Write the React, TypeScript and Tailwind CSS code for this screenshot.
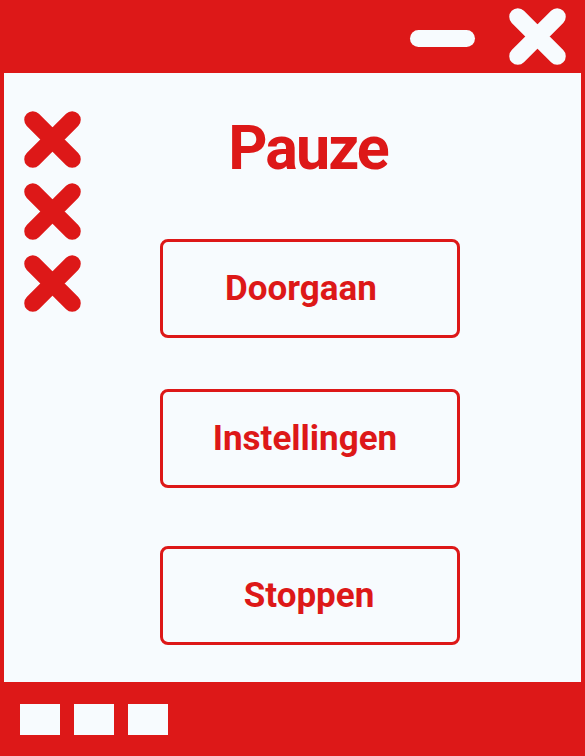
const RED = "#dd1818";

function CrossIcon({ color, size }: { color: string; size: number }) {
  return (
    <svg width={size} height={size} viewBox="0 0 60 60" fill="none">
      <path d="M10 10 L50 50 M50 10 L10 50" stroke={color} strokeWidth={17.5} strokeLinecap="round" />
    </svg>
  );
}

type MenuButton = {
  label: string;
  offset: string;
};

const buttons: MenuButton[] = [
  { label: "Doorgaan", offset: "mt-[60px] pr-[18px]" },
  { label: "Instellingen", offset: "mt-[51px] pr-[10px]" },
  { label: "Stoppen", offset: "mt-[58px] pr-[2px]" },
];

export default function App() {
  return (
    <div
      className="flex h-[756px] w-[585px] flex-col bg-[#dd1818]"
      style={{ fontFamily: "Roboto, 'Liberation Sans', sans-serif" }}
    >
      <header className="flex h-[73px] shrink-0 items-center justify-end gap-[33px] pr-[18px]">
        <div className="mt-[3px] h-[17px] w-[65px] rounded-full bg-[#f7fbfe]" />
        <div className="-mt-[1px]">
          <CrossIcon color="#f7fbfe" size={59} />
        </div>
      </header>

      <main className="mx-[4px] flex flex-1 bg-[#f7fbfe]">
        <div className="flex flex-col gap-[13px] pl-[19px] pt-[37px]">
          <CrossIcon color={RED} size={59} />
          <CrossIcon color={RED} size={59} />
          <CrossIcon color={RED} size={59} />
        </div>

        <div className="ml-[78px] flex w-[300px] flex-col">
          <h1 className="mt-[45px] pr-[4px] text-center text-[61px] font-bold leading-none tracking-[-2px] text-[#dd1818]">
            Pauze
          </h1>
          {buttons.map((item) => (
            <button
              key={item.label}
              className={`flex h-[99px] w-[300px] items-center justify-center rounded-[8px] border-[3px] border-[#dd1818] text-[35px] font-bold leading-none text-[#dd1818] ${item.offset}`}
            >
              {item.label}
            </button>
          ))}
        </div>
      </main>

      <footer className="flex h-[74px] shrink-0 gap-[14px] pl-[20px] pt-[22px]">
        <div className="h-[31px] w-[40px] bg-[#f7fbfe]" />
        <div className="h-[31px] w-[40px] bg-[#f7fbfe]" />
        <div className="h-[31px] w-[40px] bg-[#f7fbfe]" />
      </footer>
    </div>
  );
}
